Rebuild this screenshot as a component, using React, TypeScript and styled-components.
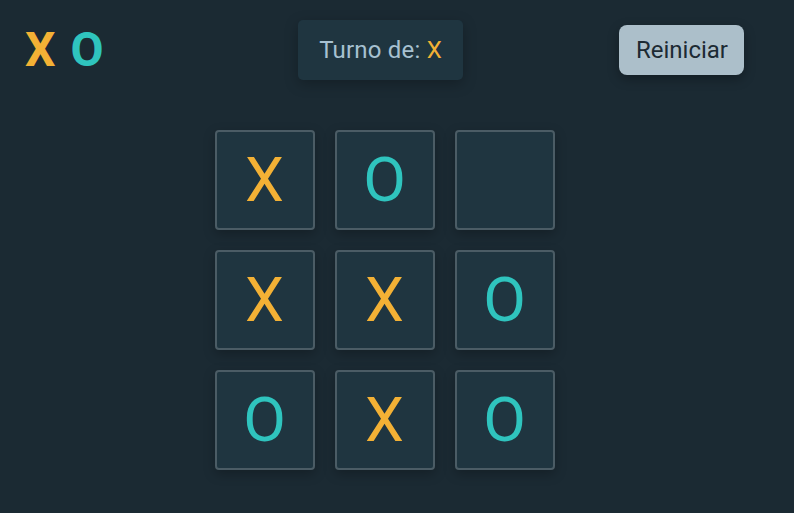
import React from "react";
import styled, { createGlobalStyle } from "styled-components";

const Global = createGlobalStyle`
  html, body { margin: 0; padding: 0; background: #1b2a33; }
  body { font-family: Roboto, "Liberation Sans", sans-serif; }
`;

const Page = styled.div`
  width: 770px;
  min-height: 513px;
  box-sizing: border-box;
  padding: 20px 26px 0 25px;
`;

const Header = styled.header`
  display: grid;
  grid-template-columns: 1fr auto 1fr;
  align-items: center;
  height: 60px;
`;

const Logo = styled.div`
  display: flex;
  gap: 15px;
  font-size: 48px;
  font-weight: 700;
  line-height: 1;
  justify-self: start;
`;

const Mark = styled.span<{ $p: "X" | "O" }>`
  color: ${(p) => (p.$p === "X" ? "#f3b135" : "#2fc4be")};
`;

const Turn = styled.div`
  background: #1f3540;
  border-radius: 5px;
  padding: 16px 21px;
  font-size: 24px;
  letter-spacing: 0.2px;
  line-height: 28px;
  color: #a7c1d1;
  box-shadow: 0 4px 14px rgba(0, 0, 0, 0.25);
  margin-right: 8px;
`;

const ResetButton = styled.button`
  justify-self: end;
  background: #acbfca;
  color: #1c2a33;
  border: none;
  border-radius: 8px;
  padding: 0 16px 0 17px;
  height: 50px;
  font-family: Roboto, "Liberation Sans", sans-serif;
  font-size: 24px;
  cursor: pointer;
  box-shadow: 0 4px 12px rgba(0, 0, 0, 0.3);
`;

const Board = styled.div`
  margin: 50px auto 0;
  display: grid;
  grid-template-columns: repeat(3, 100px);
  grid-auto-rows: 100px;
  gap: 20px;
  width: 340px;
`;

const Cell = styled.button<{ $p: string }>`
  box-sizing: border-box;
  background: #1f3540;
  border: 2px solid #4b5c65;
  border-radius: 4px;
  display: flex;
  align-items: center;
  justify-content: center;
  font-family: Roboto, "Liberation Sans", sans-serif;
  font-size: 62px;
  font-weight: 400;
  line-height: 1;
  padding: 0;
  color: ${(p) => (p.$p === "X" ? "#f3b135" : "#2fc4be")};
  box-shadow: 0 4px 12px rgba(0, 0, 0, 0.25);
`;

const cells = ["X", "O", "", "X", "X", "O", "O", "X", "O"];

export default function App() {
  return (
    <>
      <Global />
      <Page>
        <Header>
          <Logo>
            <Mark $p="X">X</Mark>
            <Mark $p="O">O</Mark>
          </Logo>
          <Turn>
            Turno de: <Mark $p="X">X</Mark>
          </Turn>
          <ResetButton>Reiniciar</ResetButton>
        </Header>
        <Board>
          {cells.map((c, i) => (
            <Cell key={i} $p={c}>
              {c}
            </Cell>
          ))}
        </Board>
      </Page>
    </>
  );
}
